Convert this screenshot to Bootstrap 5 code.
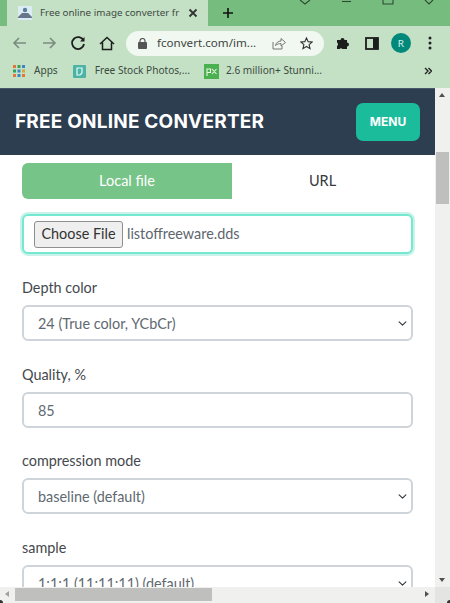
<!DOCTYPE html>
<html lang="en">

<head>
    <meta charset="UTF-8">
    <meta name="viewport" content="width=device-width, initial-scale=1.0">
    <title>Free online image converter</title>
    <link rel="stylesheet" href="https://cdn.jsdelivr.net/npm/bootstrap@5.3.2/dist/css/bootstrap.min.css">
    <style>
        html, body { height: 100%; overflow: hidden; background: #fff; }
        body { font-family: "Lato", "Liberation Sans", sans-serif; }
        .app-frame { width: 450px; height: 603px; overflow: hidden; }

        /* browser chrome */
        .tab-strip { height: 26px; background: #77bc7f; font-family: "Noto Sans", "Open Sans", sans-serif; }
        .tab-shape { width: 201px; height: 26px; margin-left: 7px; padding-left: 11px; padding-right: 10px; background: #c4e1c6; font-size: 9.8px; color: #3f4a42; position: relative; }
        .tab-shape::before, .tab-shape::after { content: ""; position: absolute; bottom: 0; width: 7px; height: 26px; background: #77bc7f; }
        .tab-shape::before { left: -7px; border-radius: 0 0 7px 0; }
        .tab-shape::after { right: -7px; border-radius: 0 0 0 7px; }
        .tab-strip-wrap { background: #c4e1c6; }
        .tab-title { white-space: nowrap; margin-left: 8px; }
        .win-ctrl { position: absolute; top: 0; left: 0; }
        .new-tab { margin-left: 14px; }
        .tool-row { height: 34px; background: #c4e1c6; padding-left: 12px; }
        .nav-gap-a { margin-left: 13px; }
        .nav-gap-b { margin-left: 13px; }
        .addr-pill { width: 198px; height: 25px; margin-left: 11px; margin-right: 12px; background: #f1f8f1; border-radius: 13px; font-family: "Noto Sans", "Open Sans", sans-serif; font-size: 11.6px; color: #3d4640; padding-left: 12px; }
        .addr-text { margin-left: 10px; }
        .star-icon { margin-left: 14px; margin-right: 11px; }
        .side-gap { margin-left: 15px; }
        .avatar-gap { margin-left: 12px; }
        .dots-gap { margin-left: 17px; }
        .mark-row { height: 28px; padding-bottom: 6px; background: #c4e1c6; font-family: "Noto Sans", "Open Sans", sans-serif; font-size: 10.1px; color: #3c4a40; padding-left: 13px; white-space: nowrap; }
        .mark-text { margin-left: 9px; }
        .mark-text-tight { margin-left: 7px; }
        .mark-icon { margin-left: 15px; }
        .mark-icon-tight { margin-left: 14px; }
        .mark-more { margin-left: 102px; }
        .avatar-dot { width: 20px; height: 20px; background: #00897b; color: #d5efe9; font-size: 10px; }

        /* page */
        .page-pane { height: 499px; min-height: 0; }
        .page-main { width: 435px; overflow: hidden; }
        .site-head { height: 67px; background: #2c3e50; border-top: 1px solid #46586a; padding: 0 15px; }
        .site-brand { font-family: "Inter", "Liberation Sans", sans-serif; font-weight: 700; font-size: 19px; color: #fff; letter-spacing: .2px; }
        .menu-btn { width: 64px; height: 38px; padding: 0; background: #1abc9c; border: 0; border-radius: 7px; color: #fff; font-family: "Inter", sans-serif; font-weight: 700; font-size: 12px; }
        .form-area { padding: 8px 22px 0; color: #495057; }
        .src-tab { height: 36px; width: 210px; font-size: 14.5px; color: #343a40; text-decoration: none; }
        .src-tab.active-src { background: #77c488; color: #fff; border-radius: 6px 0 0 6px; }
        .src-tab.plain-src { width: 181px; background: #fff; }
        .file-box { width: 391px; height: 40px; margin-top: 15px; border: 2px solid #74e8d0; border-radius: 6px; box-shadow: 0 0 0 2px #c9f3ea; background: #fff; padding-left: 10px; font-size: 14.4px; color: #5d666e; }
        .file-pick { height: 27px; width: 89px; padding: 0; margin-right: 4px; font-size: 14.4px; color: #333; background: #efefef; border: 1px solid #8f8f8f; border-radius: 3px; }
        .field-label { font-size: 14.4px; line-height: 18px; margin-bottom: 8px; color: #45494d; }
        .field-group { margin-top: 25px; }
        .field-group.tight-field { margin-top: 24px; }
        .form-area .form-control, .form-area .form-select { width: 391px; height: 36px; border: 2px solid #ced4da; border-radius: 6px; font-size: 14.4px; color: #5f6971; padding: 0 14px; box-shadow: none; }
        .form-area .form-select { padding-top: 2px; background-size: 11px 9px; background-position: right 3px center; }

        /* scrollbars */
        .vbar { width: 15px; background: #f0f0ef; position: relative; }
        .vbar-thumb { position: absolute; top: 64px; left: 1px; width: 13px; height: 52px; background: #bfbfbd; }
        .arrow-up, .arrow-down { position: absolute; left: 4px; width: 0; height: 0; border-left: 3.5px solid transparent; border-right: 3.5px solid transparent; }
        .arrow-up { top: 5px; border-bottom: 4px solid #505050; }
        .arrow-down { bottom: 5px; border-top: 4px solid #505050; }
        .hbar { height: 16px; background: #f0f0ef; position: relative; }
        .hbar-thumb { position: absolute; left: 15px; top: 1px; width: 197px; height: 13px; background: #bfbfbd; }
        .arrow-left, .arrow-right { position: absolute; top: 4px; width: 0; height: 0; border-top: 3.5px solid transparent; border-bottom: 3.5px solid transparent; }
        .arrow-left { left: 5px; border-right: 4px solid #a0a0a0; }
        .arrow-right { left: 425px; border-left: 4px solid #505050; }
        .hbar-corner { position: absolute; right: 0; top: 0; width: 15px; height: 16px; background: #e4e4e3; }
        .hbar::before, .hbar::after { content: ""; position: absolute; bottom: 0; width: 3px; height: 3px; background: #333; z-index: 1; }
        .hbar::before { left: 0; border-top-right-radius: 3px; }
        .hbar::after { right: 0; border-top-left-radius: 3px; }
    </style>
</head>

<body>
    <div class="app-frame d-flex flex-column position-relative">
        <!-- abas do navegador -->
        <div class="tab-strip-wrap">
            <div class="tab-strip d-flex align-items-center position-relative">
                <div class="tab-shape d-flex align-items-center">
                    <svg width="14" height="14" viewBox="0 0 14 14">
                        <rect width="14" height="14" fill="#dcecf4"/>
                        <circle cx="7" cy="4" r="2.2" fill="#5c7f9a"/>
                        <path d="M0 11 L4 7 H10 L14 11 V12 H0Z" fill="#67768a"/>
                    </svg>
                    <span class="tab-title">Free online image converter fr</span>
                    <svg class="ms-auto" width="10" height="10" viewBox="0 0 10 10" stroke="#333" stroke-width="1.8" fill="none">
                        <path d="M1.5 1.5 L8.5 8.5 M8.5 1.5 L1.5 8.5"/>
                    </svg>
                </div>
                <svg class="new-tab" width="12" height="12" viewBox="0 0 12 12" stroke="#111" stroke-width="1.6">
                    <path d="M6 1 V11 M1 6 H11"/>
                </svg>
                <svg class="win-ctrl" width="450" height="8" viewBox="0 0 450 8" fill="none" stroke="#2f4a33" stroke-width="1.1">
                    <path d="M300 0 L305 4 L310 0"/>
                    <path d="M342 1.5 H351"/>
                    <path d="M383 0 V4 H393 V0"/>
                    <path d="M425 0 L429 4 L433 0"/>
                </svg>
            </div>
        </div>

        <!-- barra de endereço -->
        <div class="tool-row d-flex align-items-center">
            <svg width="16" height="14" viewBox="0 0 16 14" fill="none" stroke="#7c8a80" stroke-width="1.6">
                <path d="M14 7 H2 M7 2 L2 7 L7 12"/>
            </svg>
            <svg class="nav-gap-a" width="16" height="14" viewBox="0 0 16 14" fill="none" stroke="#7c8a80" stroke-width="1.6">
                <path d="M2 7 H14 M9 2 L14 7 L9 12"/>
            </svg>
            <svg class="nav-gap-a" width="16" height="16" viewBox="0 0 16 16" fill="none" stroke="#1d1d1d" stroke-width="1.8">
                <path d="M13.5 5.5 A6 6 0 1 0 14 9"/>
                <path d="M14.5 2 V6.5 H10" fill="#1d1d1d" stroke="none"/>
            </svg>
            <svg class="nav-gap-b" width="16" height="15" viewBox="0 0 16 15" fill="none" stroke="#1d1d1d" stroke-width="1.5">
                <path d="M1 8 L8 1.5 L15 8 M3.5 6.5 V13.5 H12.5 V6.5"/>
            </svg>
            <div class="addr-pill d-flex align-items-center">
                <svg width="9" height="11" viewBox="0 0 9 11">
                    <rect y="4" width="9" height="7" rx="1" fill="#555"/>
                    <path d="M2 4.5 V3 A2.5 2.5 0 0 1 7 3 V4.5" fill="none" stroke="#555" stroke-width="1.2"/>
                </svg>
                <span class="addr-text">fconvert.com/im...</span>
                <svg class="ms-auto" width="14" height="13" viewBox="0 0 14 13" fill="none" stroke="#777" stroke-width="1">
                    <path d="M1 5 V12 H10 V9"/>
                    <path d="M3.5 8.5 C4 5.5 6.5 4 9 4 V1.5 L13.5 5.5 L9 9 V6.5 C7 6.5 5 7 3.5 8.5Z"/>
                </svg>
                <svg class="star-icon" width="13" height="13" viewBox="0 0 14 14" fill="none" stroke="#333" stroke-width="1.2">
                    <path d="M7 1 L8.8 5 L13 5.4 L9.8 8.2 L10.8 12.5 L7 10.2 L3.2 12.5 L4.2 8.2 L1 5.4 L5.2 5Z"/>
                </svg>
            </div>
            <svg width="14" height="14" viewBox="0 0 14 14" fill="#1c1c1c">
                <path d="M1 4 H4.5 A2 2 0 0 1 8.5 4 H11 V6.5 A2 2 0 0 1 11 10.5 V13 H6.5 A2 2 0 0 0 3.5 13 H1 V10 A2 2 0 0 0 1 6.5Z"/>
            </svg>
            <svg class="side-gap" width="14" height="13" viewBox="0 0 14 13">
                <rect x="1" y="1" width="12" height="11" fill="none" stroke="#1c1c1c" stroke-width="1.8"/>
                <rect x="8" y="1" width="5" height="11" fill="#1c1c1c"/>
            </svg>
            <div class="avatar-dot avatar-gap rounded-circle d-flex align-items-center justify-content-center">R</div>
            <svg class="dots-gap" width="4" height="14" viewBox="0 0 4 14" fill="#222">
                <circle cx="2" cy="2" r="1.5"/><circle cx="2" cy="7" r="1.5"/><circle cx="2" cy="12" r="1.5"/>
            </svg>
        </div>

        <!-- favoritos -->
        <div class="mark-row d-flex align-items-center">
            <svg width="12" height="12" viewBox="0 0 12 12">
                <g fill="#e8743b"><rect width="3" height="3"/><rect y="9" width="3" height="3"/><rect x="9" y="9" width="3" height="3"/></g>
                <g fill="#3b9f5c"><rect x="4.500" width="3" height="3"/><rect y="4.500" width="3" height="3"/></g>
                <g fill="#3d85c6"><rect x="9" width="3" height="3"/><rect x="4.500" y="4.500" width="3" height="3"/><rect x="4.500" y="9" width="3" height="3"/></g>
                <rect x="9" y="4.500" width="3" height="3" fill="#d9a43a"/>
            </svg>
            <span class="mark-text">Apps</span>
            <svg class="mark-icon" width="13" height="13" viewBox="0 0 13 13">
                <rect width="13" height="13" rx="1" fill="#4fb3a4"/>
                <path d="M4 3 H9 V8 L7 10 H4Z" fill="none" stroke="#dff" stroke-width="1.2"/>
            </svg>
            <span class="mark-text">Free Stock Photos,...</span>
            <svg class="mark-icon-tight" width="15" height="15" viewBox="0 0 15 15">
                <rect width="15" height="15" fill="#4bb04f"/>
                <path d="M3 12 V5 H6.500 V8.500 H3 M8 5 L12.500 10 M12.500 5 L8 10" fill="none" stroke="#eaf7ea" stroke-width="1.1"/>
            </svg>
            <span class="mark-text-tight">2.6 million+ Stunni...</span>
            <svg class="mark-more" width="8" height="8" viewBox="0 0 8 8" fill="none" stroke="#222" stroke-width="1.400">
                <path d="M1 1 L4 4 L1 7 M4.500 1 L7.500 4 L4.500 7"/>
            </svg>
        </div>

        <!-- página -->
        <div class="page-pane d-flex flex-grow-1">
            <div class="page-main">
                <nav class="site-head d-flex align-items-center justify-content-between">
                    <span class="site-brand">FREE ONLINE CONVERTER</span>
                    <button type="button" class="btn menu-btn">MENU</button>
                </nav>

                <form class="form-area">
                    <div class="d-flex">
                        <a href="#" class="src-tab active-src d-flex align-items-center justify-content-center">Local file</a>
                        <a href="#" class="src-tab plain-src d-flex align-items-center justify-content-center">URL</a>
                    </div>

                    <div class="file-box d-flex align-items-center">
                        <button type="button" class="file-pick">Choose File</button>
                        <span>listoffreeware.dds</span>
                    </div>

                    <div class="field-group">
                        <label class="field-label d-block">Depth color</label>
                        <select class="form-select">
                            <option>24 (True color, YCbCr)</option>
                        </select>
                    </div>

                    <div class="field-group">
                        <label class="field-label d-block">Quality, %</label>
                        <input type="text" class="form-control" value="85">
                    </div>

                    <div class="field-group tight-field">
                        <label class="field-label d-block">compression mode</label>
                        <select class="form-select">
                            <option>baseline (default)</option>
                        </select>
                    </div>

                    <div class="field-group">
                        <label class="field-label d-block">sample</label>
                        <select class="form-select">
                            <option>1:1:1 (11:11:11) (default)</option>
                        </select>
                    </div>
                </form>
            </div>
            <div class="vbar">
                <span class="arrow-up"></span>
                <div class="vbar-thumb"></div>
                <span class="arrow-down"></span>
            </div>
        </div>

        <div class="hbar">
            <span class="arrow-left"></span>
            <div class="hbar-thumb"></div>
            <span class="arrow-right"></span>
            <div class="hbar-corner"></div>
        </div>
    </div>

    <script src="https://cdn.jsdelivr.net/npm/bootstrap@5.3.2/dist/js/bootstrap.bundle.min.js"></script>
</body>

</html>
